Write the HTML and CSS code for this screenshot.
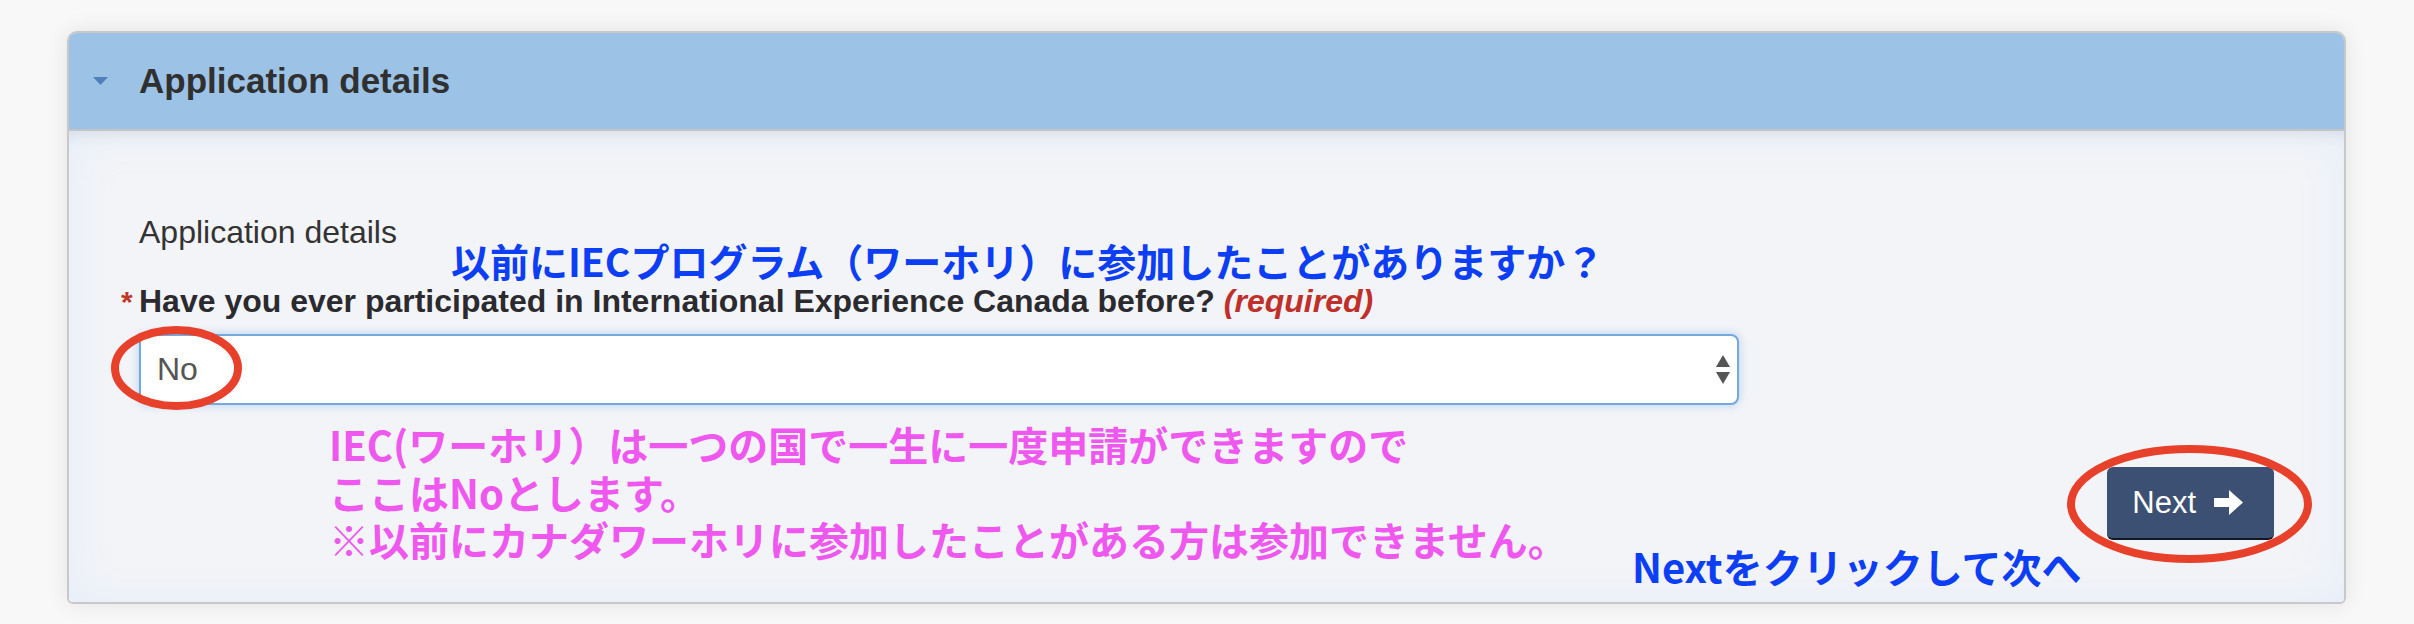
FILE: index.html
```html
<!DOCTYPE html>
<html lang="ja">
<head>
<meta charset="utf-8">
<title>Application details</title>
<link rel="stylesheet" href="styles.css">
</head>
<body>
<div class="page">
  <section class="panel">
    <header class="panel-head">
      <svg class="caret" width="15" height="8" viewBox="0 0 15 8"><polygon points="0,0 15,0 7.5,8"/></svg>
      <h2 class="panel-title">Application details</h2>
    </header>
    <div class="panel-body">
      <div class="legend">Application details</div>
      <label class="question"><span class="star">*</span>Have you ever participated in International Experience Canada before? <em class="required">(required)</em></label>
      <div class="select">
        <span class="select-value">No</span>
        <svg class="select-arrows" width="14" height="29" viewBox="0 0 14 29"><polygon points="7,0 14,12 0,12"/><polygon points="0,17 14,17 7,29"/></svg>
      </div>
      <div class="actions">
        <button class="next-btn" type="button">Next<svg class="arrow" width="29" height="25" viewBox="0 0 29 25"><polygon points="0,8 15,8 15,0 29,12.5 15,25 15,17 0,17"/></svg></button>
      </div>
    </div>
  </section>

  <p class="note note-blue note-q">以前にIECプログラム（ワーホリ）に参加したことがありますか？</p>
  <div class="note note-pink">
    <span class="note-line">IEC(ワーホリ）は一つの国で一生に一度申請ができますので</span>
    <span class="note-line">ここはNoとします。</span>
    <span class="note-line">※以前にカナダワーホリに参加したことがある方は参加できません。</span>
  </div>
  <p class="note note-blue note-next">Nextをクリックして次へ</p>

  <svg class="rings" width="2414" height="624" viewBox="0 0 2414 624">
    <ellipse cx="176.5" cy="368" rx="61.5" ry="38"/>
    <ellipse cx="2189.5" cy="504" rx="118.5" ry="55"/>
  </svg>
</div>
</body>
</html>
```

FILE: styles.css
```css
* { box-sizing: border-box; }
html, body { margin: 0; padding: 0; }
body {
  background: #f8f8f8;
  font-family: "Liberation Sans", Arial, sans-serif;
}
.page {
  position: relative;
  width: 2414px;
  height: 624px;
  padding: 31px 0 0 67px;
  overflow: hidden;
}
.panel {
  width: 2279px;
  border: 2px solid #c8c8c8;
  border-radius: 10px 10px 6px 6px;
  background: #f3f4f7;
  box-shadow: 0 0 22px rgba(0, 0, 0, 0.09);
  overflow: hidden;
}
.panel-head {
  height: 98px;
  background: #9cc2e6;
  border-bottom: 2px solid #c3c4c6;
  display: flex;
  align-items: center;
  padding-left: 24px;
}
.caret { margin-right: 31px; flex: none; }
.caret polygon { fill: #4f80b9; }
.panel-title {
  margin: 0;
  font-size: 35px;
  font-weight: 700;
  line-height: 40px;
  color: #303030;
}
.panel-body {
  padding: 81px 70px 62px;
  background: #f3f4f7;
  box-shadow: inset 0 14px 16px -12px rgba(0, 0, 0, 0.09), inset 0 0 45px rgba(226, 236, 252, 0.9);
}
.legend {
  font-size: 32px;
  line-height: 40px;
  color: #333;
  margin-bottom: 29px;
}
.question {
  display: block;
  font-size: 32px;
  font-weight: 700;
  line-height: 40px;
  color: #2b2a2f;
  margin-bottom: 12px;
}
.star {
  display: inline-block;
  width: 18px;
  margin-left: -18px;
  color: #c0392b;
  font-size: 30px;
}
.required {
  color: #c0302a;
  font-style: italic;
}
.select {
  width: 1600px;
  height: 71px;
  border: 2px solid #74a8df;
  border-radius: 8px;
  background: #fff;
  box-shadow: 0 0 10px rgba(102, 165, 230, 0.45);
  display: flex;
  align-items: center;
  justify-content: space-between;
  padding: 0 7px 0 16px;
}
.select-value {
  font-size: 32px;
  color: #555;
}
.select-arrows polygon { fill: #555; }
.actions {
  display: flex;
  justify-content: flex-end;
  margin-top: 62px;
}
.next-btn {
  height: 73px;
  padding: 0 31px 0 25px;
  background: #3c5073;
  border: 0;
  border-bottom: 2px solid #111822;
  border-radius: 6px;
  color: #fff;
  font-family: "Liberation Sans", Arial, sans-serif;
  font-size: 31px;
  display: flex;
  align-items: center;
  gap: 18px;
}
.arrow polygon { fill: #fff; }

.note {
  position: absolute;
  margin: 0;
  font-family: "Noto Sans CJK JP", "Liberation Sans", sans-serif;
  font-weight: 700;
  font-size: 40px;
  line-height: 40px;
  white-space: nowrap;
}
.note-blue { color: #0c3ef5; }
.note-q { font-size: 39px; left: 451px; top: 240px; }
.note-pink {
  color: #ee58ef;
  left: 329px;
  top: 424px;
  display: flex;
  flex-direction: column;
  gap: 7.5px;
}
.note-line { display: block; }
.note-next { left: 1632px; top: 546px; }

.rings {
  position: absolute;
  left: 0;
  top: 0;
  pointer-events: none;
}
.rings ellipse {
  fill: none;
  stroke: #e8412b;
  stroke-width: 8;
}
```
